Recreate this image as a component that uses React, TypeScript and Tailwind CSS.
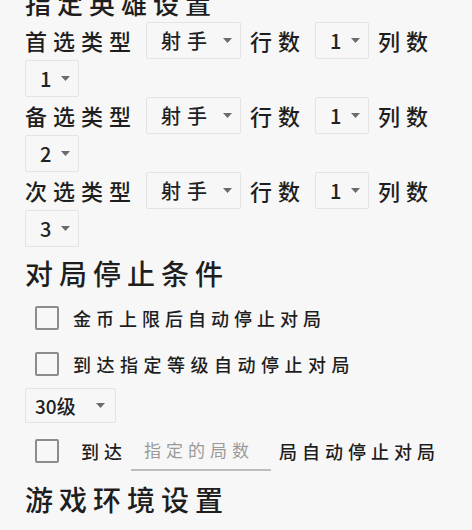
import React from "react";

const FONT = "font-['Noto_Sans_CJK_SC','Noto_Sans',sans-serif]";

function Arrow() {
  return (
    <svg width="9" height="5" viewBox="0 0 9 5" className="shrink-0">
      <path d="M0 0 L9 0 L4.5 5 Z" fill="#6b6b6b" />
    </svg>
  );
}

function Spinner({ value, width, textGap }: { value: string; width: string; textGap: string }) {
  return (
    <div
      className={`flex h-[37px] items-center justify-between rounded-[2px] border border-[#e4e4e4] pl-[14px] pr-[8px] ${width}`}
    >
      <span className={`text-[20px] font-medium leading-none text-[#222] ${textGap}`}>{value}</span>
      <Arrow />
    </div>
  );
}

function Label({ text }: { text: string }) {
  return <span className="text-[22px] font-medium leading-[37px] tracking-[6px] text-[#1e1e1e]">{text}</span>;
}

function HeroRow({ kind, col }: { kind: string; col: string }) {
  return (
    <div className="flex flex-wrap items-center gap-x-[9px] gap-y-[1px]">
      <Label text={kind} />
      <Spinner value="射手" width="w-[95px]" textGap="tracking-[6px]" />
      <Label text="行数" />
      <Spinner value="1" width="w-[54px]" textGap="" />
      <Label text="列数" />
      <Spinner value={col} width="w-[54px]" textGap="" />
    </div>
  );
}

function Checkbox() {
  return <div className="h-[24px] w-[24px] shrink-0 rounded-[2px] border-2 border-[#8c8c8c]" />;
}

function CheckRow({ children, className }: { children: React.ReactNode; className: string }) {
  return <div className={`flex items-center pl-[10px] ${className}`}>{children}</div>;
}

export default function App() {
  return (
    <div className={`min-h-screen overflow-hidden bg-[#f7f7f7] pl-[25px] text-[#1e1e1e] ${FONT}`}>
      <div className="-mt-[12px] mb-[4px] h-[30px] text-[26px] font-medium leading-[30px] tracking-[6px]">指定英雄设置</div>

      <HeroRow kind="首选类型" col="1" />
      <HeroRow kind="备选类型" col="2" />
      <HeroRow kind="次选类型" col="3" />

      <div className="mt-[4px] h-[44px] text-[28px] font-medium leading-[44px] tracking-[6px]">对局停止条件</div>

      <CheckRow className="h-[46px]">
        <Checkbox />
        <span className="ml-[14px] text-[18px] font-medium tracking-[5px]">金币上限后自动停止对局</span>
      </CheckRow>
      <CheckRow className="h-[46px]">
        <Checkbox />
        <span className="ml-[14px] text-[18px] font-medium tracking-[5.5px]">到达指定等级自动停止对局</span>
      </CheckRow>

      <div className="mt-[1px] flex">
        <div className="flex h-[35px] w-[91px] items-center justify-between rounded-[2px] border border-[#e4e4e4] pl-[9px] pr-[10px]">
          <span className="text-[19px] font-medium leading-none">30级</span>
          <Arrow />
        </div>
      </div>

      <CheckRow className="mt-[4px] h-[48px]">
        <Checkbox />
        <span className="ml-[22px] text-[18px] font-medium tracking-[5px]">到达</span>
        <div className="ml-[4px] flex h-[40px] w-[140px] items-center border-b-2 border-[#bdbdbd] pl-[13px]">
          <span className="text-[17px] tracking-[5px] text-[#9a9a9a]">指定的局数</span>
        </div>
        <span className="ml-[8px] text-[18px] font-medium tracking-[5px]">局自动停止对局</span>
      </CheckRow>

      <div className="h-[48px] text-[28px] font-medium leading-[48px] tracking-[6px]">游戏环境设置</div>
    </div>
  );
}
